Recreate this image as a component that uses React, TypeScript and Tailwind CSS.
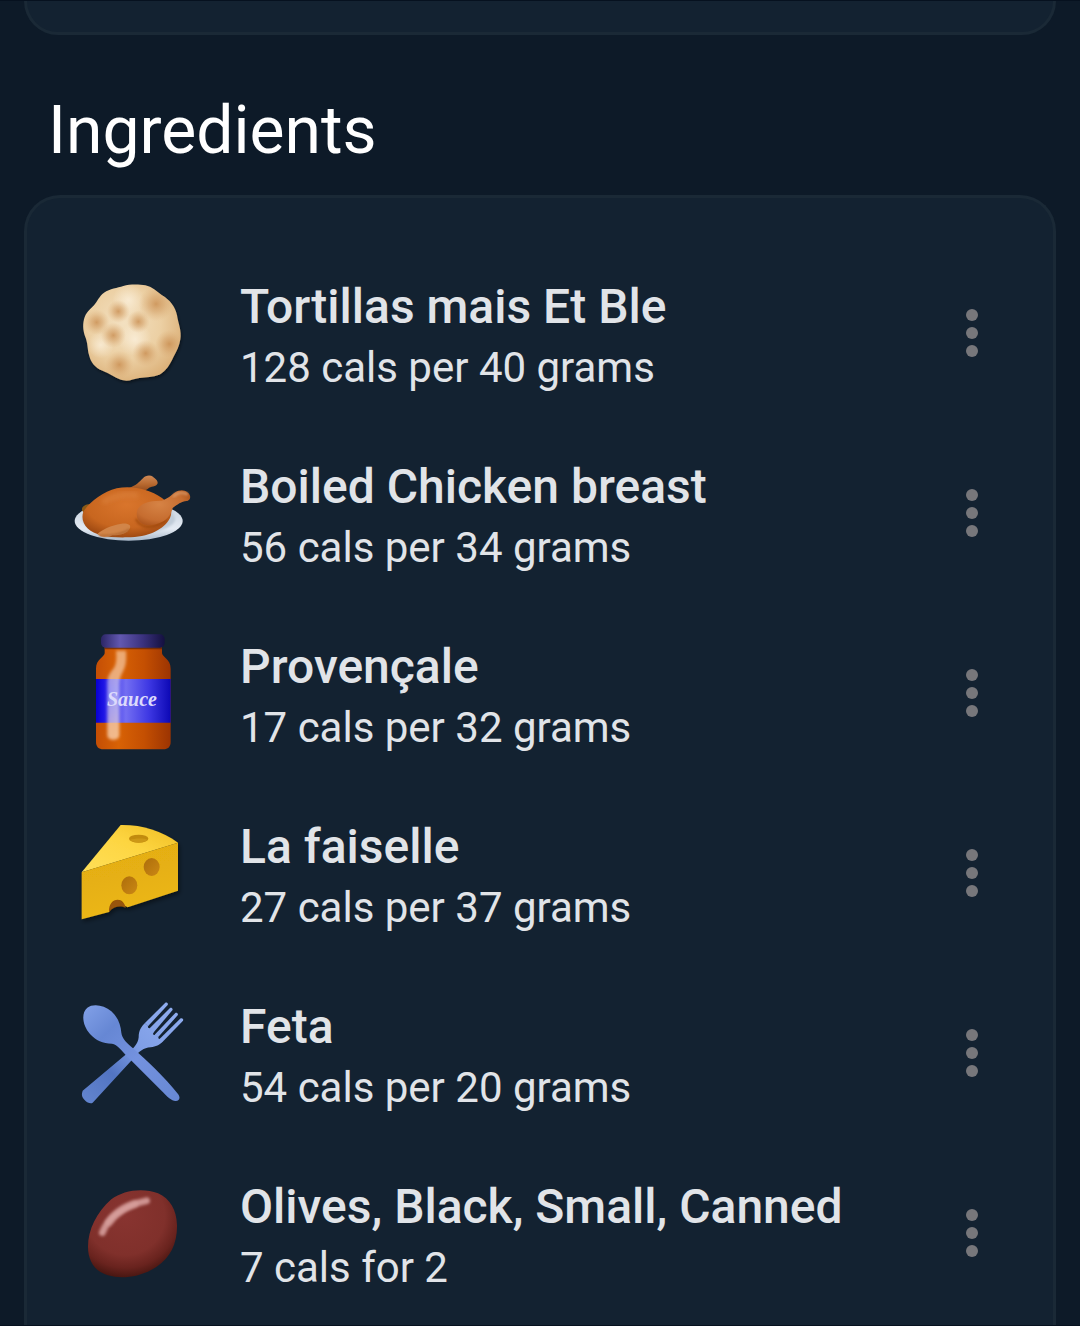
import React from 'react';

interface Ingredient {
  name: string;
  detail: string;
  icon: React.FC;
}

const TortillaIcon: React.FC = () => {
  const outline =
    'M190 48 C210 42 238 43 256 46 C276 50 290 65 306 76 C330 90 345 110 351 136 C354 158 366 184 361 208 C358 228 350 244 340 262 C330 284 318 304 298 314 C278 322 258 321 238 324 C220 326 206 336 190 331 C170 327 154 312 134 305 C112 298 96 284 89 262 C82 244 84 224 78 206 C70 188 67 168 72 148 C77 128 90 118 102 106 C112 94 118 78 132 68 C150 56 172 54 190 48 Z';
  const spots = [
    [175, 124, 34], [110, 157, 38], [235, 155, 34], [160, 196, 38],
    [288, 102, 52], [328, 222, 42], [257, 250, 40], [178, 284, 42],
  ];
  return (
    <svg viewBox="36 9 360 360" className="size-full" aria-hidden="true">
      <defs>
        <radialGradient id="tortilla-base" cx="0.42" cy="0.4" r="0.62">
          <stop offset="0" stopColor="#f3e0c0" />
          <stop offset="0.6" stopColor="#ecd0a4" />
          <stop offset="1" stopColor="#ddb37c" />
        </radialGradient>
        <radialGradient id="tortilla-spot">
          <stop offset="0" stopColor="#c98d50" stopOpacity="0.8" />
          <stop offset="0.45" stopColor="#d09a60" stopOpacity="0.5" />
          <stop offset="1" stopColor="#dcae78" stopOpacity="0" />
        </radialGradient>
        <radialGradient id="tortilla-light">
          <stop offset="0" stopColor="#fff8ea" stopOpacity="0.6" />
          <stop offset="1" stopColor="#fff8ea" stopOpacity="0" />
        </radialGradient>
        <clipPath id="tortilla-clip">
          <path d={outline} />
        </clipPath>
        <filter id="tortilla-shadow" x="-20%" y="-20%" width="140%" height="140%">
          <feDropShadow dx="3" dy="6" stdDeviation="5" floodColor="#000000" floodOpacity="0.45" />
        </filter>
      </defs>
      <path d={outline} fill="url(#tortilla-base)" filter="url(#tortilla-shadow)" />
      <g clipPath="url(#tortilla-clip)">
        <circle cx="205" cy="90" r="48" fill="url(#tortilla-light)" />
        <circle cx="225" cy="208" r="50" fill="url(#tortilla-light)" />
        <circle cx="122" cy="225" r="40" fill="url(#tortilla-light)" />
        {spots.map(([x, y, r]) => (
          <circle key={`${x}-${y}`} cx={x} cy={y} r={r} fill="url(#tortilla-spot)" />
        ))}
      </g>
    </svg>
  );
};

const ChickenIcon: React.FC = () => (
  <svg viewBox="36 9 360 360" className="size-full" aria-hidden="true">
    <defs>
      <linearGradient id="chicken-plate" x1="0" y1="0" x2="0" y2="1">
        <stop offset="0" stopColor="#c3cedb" />
        <stop offset="0.7" stopColor="#e4ebf3" />
        <stop offset="1" stopColor="#a9b8c9" />
      </linearGradient>
      <radialGradient id="chicken-body" cx="0.5" cy="0.35" r="0.65">
        <stop offset="0" stopColor="#d9752c" />
        <stop offset="0.7" stopColor="#c8661f" />
        <stop offset="1" stopColor="#a04a12" />
      </radialGradient>
      <radialGradient id="chicken-thigh" cx="0.42" cy="0.4" r="0.65">
        <stop offset="0" stopColor="#d68345" />
        <stop offset="0.7" stopColor="#c66d30" />
        <stop offset="1" stopColor="#ab531b" />
      </radialGradient>
      <linearGradient id="chicken-leg" x1="0" y1="0" x2="0" y2="1">
        <stop offset="0" stopColor="#d08a56" />
        <stop offset="0.5" stopColor="#b8692f" />
        <stop offset="1" stopColor="#8d4518" />
      </linearGradient>
      <filter id="chicken-soft" x="-20%" y="-40%" width="140%" height="180%">
        <feGaussianBlur stdDeviation="6" />
      </filter>
      <filter id="chicken-edge" x="-20%" y="-40%" width="140%" height="180%">
        <feGaussianBlur stdDeviation="3" />
      </filter>
    </defs>
    <ellipse cx="206" cy="213" rx="162" ry="59" fill="url(#chicken-plate)" />
    <ellipse cx="206" cy="206" rx="140" ry="48" fill="#c0ccd8" filter="url(#chicken-edge)" />
    <path d="M205 115 C228 107 238 96 249 85 C256 76 270 74 279 80 C284 85 294 90 293 100 C289 112 272 108 264 116 L245 128 Z" fill="url(#chicken-leg)" />
    <path d="M66 181 C64 170 75 163 90 162 L100 178 L72 190 Z" fill="#8b5a16" />
    <path d="M70 185 C88 157 128 126 170 115 C214 106 266 116 306 144 C330 160 340 184 330 204 C314 238 264 262 202 262 C146 264 104 254 84 236 C68 222 64 202 70 185 Z" fill="url(#chicken-body)" />
    <path d="M128 158 C155 138 195 130 235 136" stroke="#e08a48" strokeOpacity="0.45" strokeWidth="16" fill="none" filter="url(#chicken-soft)" />
    <path d="M228 206 C240 234 280 240 318 210" stroke="#873a0b" strokeOpacity="0.5" strokeWidth="8" fill="none" filter="url(#chicken-edge)" />
    <path d="M232 180 C240 160 270 151 305 152 C322 148 334 135 346 127 C356 119 374 118 382 127 C394 134 393 150 382 153 C366 152 352 164 338 174 C334 190 326 204 310 214 C288 226 254 232 240 216 C230 206 228 192 232 180 Z" fill="url(#chicken-thigh)" />
    <path d="M342 138 C352 128 366 126 380 132" stroke="#dc9c6c" strokeOpacity="0.7" strokeWidth="9" strokeLinecap="round" fill="none" filter="url(#chicken-edge)" />
    <path d="M112 252 C128 238 152 226 184 221 C202 219 214 224 210 234 C204 250 180 256 158 256 C142 262 122 264 112 252 Z" fill="#d18549" />
    <path d="M120 256 C148 259 185 253 208 238" stroke="#a45c26" strokeWidth="4" strokeLinecap="round" fill="none" filter="url(#chicken-edge)" />
  </svg>
);

const SauceIcon: React.FC = () => (
  <svg viewBox="36 39 360 360" className="size-full" aria-hidden="true">
    <defs>
      <linearGradient id="sauce-lid" x1="0" y1="0" x2="1" y2="0">
        <stop offset="0" stopColor="#2b2565" />
        <stop offset="0.3" stopColor="#6258b0" />
        <stop offset="0.65" stopColor="#3b327f" />
        <stop offset="1" stopColor="#14103f" />
      </linearGradient>
      <linearGradient id="sauce-glass" x1="0" y1="0" x2="1" y2="0">
        <stop offset="0" stopColor="#c44e05" />
        <stop offset="0.3" stopColor="#d86205" />
        <stop offset="0.65" stopColor="#c44f02" />
        <stop offset="1" stopColor="#9c3402" />
      </linearGradient>
      <linearGradient id="sauce-label" x1="0" y1="0" x2="1" y2="0">
        <stop offset="0" stopColor="#0700cf" />
        <stop offset="0.1" stopColor="#1d14e5" />
        <stop offset="0.4" stopColor="#736ef2" />
        <stop offset="0.7" stopColor="#3f39e4" />
        <stop offset="1" stopColor="#0c08b5" />
      </linearGradient>
      <linearGradient id="sauce-shine" x1="0" y1="0" x2="0" y2="1">
        <stop offset="0" stopColor="#ffe3c8" stopOpacity="0.55" />
        <stop offset="0.5" stopColor="#ffffff" stopOpacity="0.5" />
        <stop offset="1" stopColor="#ffe0c4" stopOpacity="0.7" />
      </linearGradient>
      <filter id="sauce-soft" x="-30%" y="-10%" width="160%" height="120%">
        <feGaussianBlur stdDeviation="4" />
      </filter>
    </defs>
    <path d="M134 80 H306 V100 C308 112 332 118 332 146 V366 C332 380 324 388 310 388 H130 C116 388 108 380 108 366 V146 C108 118 132 112 134 100 Z" fill="url(#sauce-glass)" />
    <path d="M134 80 H306 V88 H134 Z" fill="#5e2205" fillOpacity="0.7" />
    <path d="M108 177 H332 V308 H108 Z" fill="url(#sauce-label)" />
    <path d="M168 92 H198 C200 120 198 138 188 156 C180 170 178 180 178 194 V346 C178 364 142 364 142 346 V190 C142 168 152 156 162 144 C170 130 170 112 168 92 Z" fill="url(#sauce-shine)" filter="url(#sauce-soft)" />
    <rect x="123" y="43" width="191" height="40" rx="14" fill="url(#sauce-lid)" />
    <text x="141" y="257" fontSize="60" fontStyle="italic" fontWeight="700" fontFamily="'Liberation Serif', serif" fill="#dcdafc">Sauce</text>
  </svg>
);

const CheeseIcon: React.FC = () => (
  <svg viewBox="36 9 360 360" className="size-full" aria-hidden="true">
    <defs>
      <linearGradient id="cheese-top" x1="0" y1="1" x2="1" y2="0">
        <stop offset="0" stopColor="#ffdf58" />
        <stop offset="0.55" stopColor="#fdd541" />
        <stop offset="1" stopColor="#efbd22" />
      </linearGradient>
      <linearGradient id="cheese-side" x1="0" y1="0" x2="0.3" y2="1">
        <stop offset="0" stopColor="#e4ad11" />
        <stop offset="0.5" stopColor="#e6b012" />
        <stop offset="1" stopColor="#ecb717" />
      </linearGradient>
      <linearGradient id="cheese-hole" x1="0" y1="0" x2="1" y2="1">
        <stop offset="0" stopColor="#ad6d0b" />
        <stop offset="1" stopColor="#cb8814" />
      </linearGradient>
      <filter id="cheese-shadow" x="-20%" y="-20%" width="140%" height="140%">
        <feDropShadow dx="5" dy="8" stdDeviation="6" floodColor="#000000" floodOpacity="0.45" />
      </filter>
    </defs>
    <g filter="url(#cheese-shadow)">
      <path d="M65 187 L182 45 C246 44 304 62 354 98 Z" fill="url(#cheese-top)" />
      <path d="M65 187 L354 98 V242 L203 292 C188 282 158 286 147 306 L65 328 Z" fill="url(#cheese-side)" />
      <path d="M147 306 C146 282 158 269 173 269 C186 269 194 279 197 293 C182 286 160 288 147 306 Z" fill="#985507" />
    </g>
    <ellipse cx="236" cy="86" rx="29" ry="12" fill="#c18b0e" />
    <path d="M210 90 C222 100 252 100 263 89 C254 84 221 84 210 90 Z" fill="#cd9817" />
    <ellipse cx="275" cy="171" rx="24" ry="27" fill="url(#cheese-hole)" />
    <ellipse cx="208" cy="226" rx="24" ry="27" fill="url(#cheese-hole)" />
  </svg>
);

const CutleryIcon: React.FC = () => (
  <svg viewBox="36 9 360 360" className="size-full" aria-hidden="true">
    <defs>
      <linearGradient id="cutlery-fork" x1="80" y1="335" x2="340" y2="60" gradientUnits="userSpaceOnUse">
        <stop offset="0" stopColor="#6284ce" />
        <stop offset="0.3" stopColor="#5274c2" />
        <stop offset="0.6" stopColor="#7f9ee6" />
        <stop offset="1" stopColor="#8eacef" />
      </linearGradient>
      <linearGradient id="cutlery-spoon" x1="80" y1="50" x2="355" y2="330" gradientUnits="userSpaceOnUse">
        <stop offset="0" stopColor="#7f9ee6" />
        <stop offset="0.25" stopColor="#6687d4" />
        <stop offset="0.55" stopColor="#7492df" />
        <stop offset="1" stopColor="#6788d3" />
      </linearGradient>
    </defs>
    <g fill="url(#cutlery-fork)">
      <path d="M68 302 L202 190 C220 176 234 162 236 142 C236 120 245 110 254 100 L264 108 C262 114 268 116 272 114 L281 127 C276 134 282 137 286 134 L295 141 C294 147 299 148 302 146 L309 154 C298 166 288 170 272 172 C250 174 238 184 224 201 L98 338 C90 346 62 328 66 310 Z" />
      <path d="M254 100 L316 38 C320 36 326 40 323 45 L264 109 Z" />
      <path d="M269 115 L330 54 C334 52 340 56 337 61 L280 128 Z" />
      <path d="M284 134 L346 69 C350 67 356 71 353 76 L294 142 Z" />
      <path d="M298 148 L362 85 C366 83 372 87 369 92 L308 155 Z" />
    </g>
    <path d="M82 53 C98 40 132 44 154 64 C174 82 182 104 184 128 C186 146 202 160 218 174 C262 212 314 262 354 312 C364 326 356 336 342 332 C330 330 316 314 306 304 L204 202 C186 184 172 162 156 161 C128 161 108 152 90 132 C68 108 62 70 82 53 Z" fill="url(#cutlery-spoon)" />
  </svg>
);

const OliveIcon: React.FC = () => (
  <svg viewBox="36 9 360 360" className="size-full" aria-hidden="true">
    <defs>
      <radialGradient id="olive-body" cx="0.42" cy="0.3" r="0.74">
        <stop offset="0" stopColor="#883430" />
        <stop offset="0.6" stopColor="#80302b" />
        <stop offset="0.8" stopColor="#69231e" />
        <stop offset="1" stopColor="#3d120d" />
      </radialGradient>
      <filter id="olive-soft" x="-30%" y="-30%" width="160%" height="160%">
        <feGaussianBlur stdDeviation="5" />
      </filter>
    </defs>
    <path d="M84 230 C84 180 110 126 154 88 C190 60 250 52 294 70 C330 86 350 120 351 166 C352 220 332 262 290 290 C250 318 190 330 144 316 C104 304 84 272 84 230 Z" fill="url(#olive-body)" />
    <path d="M127 188 C142 150 182 108 260 92" stroke="#dca5a2" strokeOpacity="0.85" strokeWidth="20" strokeLinecap="round" fill="none" filter="url(#olive-soft)" />
    <path d="M148 156 C162 134 190 112 222 102" stroke="#dca5a2" strokeOpacity="0.5" strokeWidth="24" strokeLinecap="round" fill="none" filter="url(#olive-soft)" />
  </svg>
);

const ingredients: Ingredient[] = [
  { name: 'Tortillas mais Et Ble', detail: '128 cals per 40 grams', icon: TortillaIcon },
  { name: 'Boiled Chicken breast', detail: '56 cals per 34 grams', icon: ChickenIcon },
  { name: 'Provençale', detail: '17 cals per 32 grams', icon: SauceIcon },
  { name: 'La faiselle', detail: '27 cals per 37 grams', icon: CheeseIcon },
  { name: 'Feta', detail: '54 cals per 20 grams', icon: CutleryIcon },
  { name: 'Olives, Black, Small, Canned', detail: '7 cals for 2', icon: OliveIcon },
];

const IngredientRow: React.FC<{ item: Ingredient }> = ({ item }) => {
  const Icon = item.icon;
  return (
    <li className="flex items-center h-[180px]">
      <div className="size-[120px] shrink-0">
        <Icon />
      </div>
      <div className="ml-12 min-w-0 flex-1 whitespace-nowrap text-[#e1e4e8]">
        <p className="text-[48px] leading-[70px] font-medium">{item.name}</p>
        <p className="text-[42px] leading-[52px]">{item.detail}</p>
      </div>
      <button
        type="button"
        aria-label={`Options for ${item.name}`}
        className="flex size-24 shrink-0 flex-col items-center justify-center gap-[6px]"
      >
        <span className="size-3 rounded-full bg-[#77777b]" />
        <span className="size-3 rounded-full bg-[#77777b]" />
        <span className="size-3 rounded-full bg-[#77777b]" />
      </button>
    </li>
  );
};

const App: React.FC = () => (
  <main className="flex min-h-screen flex-col border-y border-[#06111f] bg-[#0d1a28] px-6 font-[Roboto,sans-serif]">
    {/* tail of the card above */}
    <div className="h-[34px] rounded-b-[36px] border-x-3 border-b-3 border-[#1a2936] bg-[#132231]" />

    <h1 className="mt-14 mb-6 px-6 text-[66px] leading-[80px] text-white">Ingredients</h1>

    <section className="flex-1 rounded-t-[36px] border-x-3 border-t-3 border-[#1a2936] bg-[#132231] pt-[45px] pr-[33px] pl-[45px]">
      <ul>
        {ingredients.map(item => (
          <IngredientRow key={item.name} item={item} />
        ))}
      </ul>
    </section>
  </main>
);

export default App;
